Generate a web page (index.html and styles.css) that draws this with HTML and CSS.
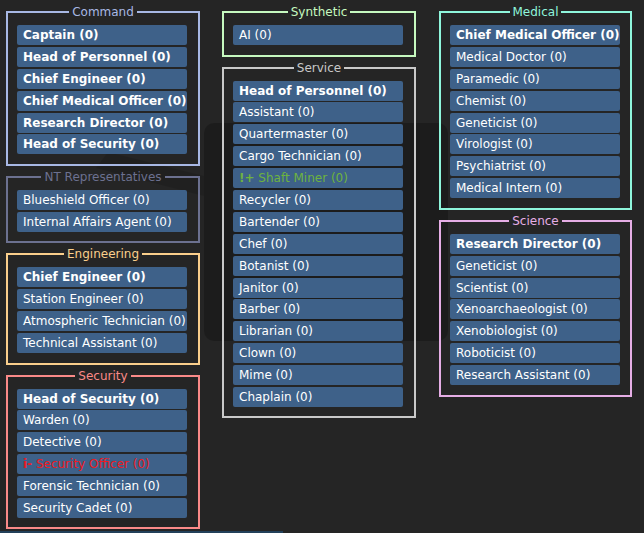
FILE: index.html
```html
<!DOCTYPE html>
<html>
<head>
<meta charset="utf-8">
<link rel="stylesheet" href="styles.css">
</head>
<body>
<svg class="watermark" width="644" height="533" viewBox="0 0 644 533" aria-hidden="true">
  <rect x="204" y="123" width="244" height="218" rx="10" fill="#000" opacity="0.22"/>
  <polygon points="108,152 204,176 204,196 96,168" fill="#000" opacity="0.12"/>
</svg>
<div class="page">
  <div class="col">
    <fieldset class="dept command">
      <legend>Command</legend>
      <div class="job head">Captain (0)</div>
      <div class="job head">Head of Personnel (0)</div>
      <div class="job head">Chief Engineer (0)</div>
      <div class="job head">Chief Medical Officer (0)</div>
      <div class="job head">Research Director (0)</div>
      <div class="job head">Head of Security (0)</div>
    </fieldset>
    <fieldset class="dept ntrep">
      <legend>NT Representatives</legend>
      <div class="job">Blueshield Officer (0)</div>
      <div class="job">Internal Affairs Agent (0)</div>
    </fieldset>
    <fieldset class="dept engineering">
      <legend>Engineering</legend>
      <div class="job head">Chief Engineer (0)</div>
      <div class="job">Station Engineer (0)</div>
      <div class="job">Atmospheric Technician (0)</div>
      <div class="job">Technical Assistant (0)</div>
    </fieldset>
    <fieldset class="dept security">
      <legend>Security</legend>
      <div class="job head">Head of Security (0)</div>
      <div class="job">Warden (0)</div>
      <div class="job">Detective (0)</div>
      <div class="job low"><b>i-</b> Security Officer (0)</div>
      <div class="job">Forensic Technician (0)</div>
      <div class="job">Security Cadet (0)</div>
    </fieldset>
  </div>
  <div class="col">
    <fieldset class="dept synthetic">
      <legend>Synthetic</legend>
      <div class="job">AI (0)</div>
    </fieldset>
    <fieldset class="dept service">
      <legend>Service</legend>
      <div class="job head">Head of Personnel (0)</div>
      <div class="job">Assistant (0)</div>
      <div class="job">Quartermaster (0)</div>
      <div class="job">Cargo Technician (0)</div>
      <div class="job high"><b>!+</b> Shaft Miner (0)</div>
      <div class="job">Recycler (0)</div>
      <div class="job">Bartender (0)</div>
      <div class="job">Chef (0)</div>
      <div class="job">Botanist (0)</div>
      <div class="job">Janitor (0)</div>
      <div class="job">Barber (0)</div>
      <div class="job">Librarian (0)</div>
      <div class="job">Clown (0)</div>
      <div class="job">Mime (0)</div>
      <div class="job">Chaplain (0)</div>
    </fieldset>
  </div>
  <div class="col col-right">
    <fieldset class="dept medical">
      <legend>Medical</legend>
      <div class="job head">Chief Medical Officer (0)</div>
      <div class="job">Medical Doctor (0)</div>
      <div class="job">Paramedic (0)</div>
      <div class="job">Chemist (0)</div>
      <div class="job">Geneticist (0)</div>
      <div class="job">Virologist (0)</div>
      <div class="job">Psychiatrist (0)</div>
      <div class="job">Medical Intern (0)</div>
    </fieldset>
    <fieldset class="dept science">
      <legend>Science</legend>
      <div class="job head">Research Director (0)</div>
      <div class="job">Geneticist (0)</div>
      <div class="job">Scientist (0)</div>
      <div class="job">Xenoarchaeologist (0)</div>
      <div class="job">Xenobiologist (0)</div>
      <div class="job">Roboticist (0)</div>
      <div class="job">Research Assistant (0)</div>
    </fieldset>
  </div>
</div>
<div class="footer-bar"></div>
</body>
</html>
```
FILE: styles.css
```css
html {
  background: #252525;
}
body {
  margin: 0;
  position: relative;
  font-family: "DejaVu Sans", Verdana, sans-serif;
  font-size: 12px;
  color: #ffffff;
  overflow: hidden;
  height: 533px;
}
.watermark {
  position: absolute;
  left: 0;
  top: 0;
  z-index: 0;
}
.page {
  position: relative;
  z-index: 1;
  display: grid;
  grid-template-columns: 194px 194px 194px;
  column-gap: 22px;
  padding: 5px 0 0 6px;
  align-items: start;
}
.col {
  display: flex;
  flex-direction: column;
  gap: 4px;
}
.col-right {
  margin-left: 1px;
}
.dept {
  margin: 0;
  min-width: 0;
  border: 2px solid var(--c);
  padding: 6px 9px 9.5px 9px;
  display: flex;
  flex-direction: column;
  gap: 1.9px;
}
.dept legend {
  margin: 0 auto;
  padding: 0 3px;
  color: var(--c);
  font-size: 12px;
  line-height: 14px;
}
.command { --c: #a8b8e4; }
.ntrep { --c: #6c7190; }
.engineering { --c: #fbcf8c; }
.security { --c: #fb8a88; }
.synthetic { --c: #c6f9bf; }
.service { --c: #c9c9c9; }
.medical { --c: #8ff6dc; }
.science { --c: #e6aee6; }

.job {
  box-sizing: border-box;
  width: 170px;
  height: 20px;
  line-height: 20px;
  padding: 0 6px;
  background: #3e6189;
  border-radius: 2px;
  white-space: nowrap;
  color: #ffffff;
}
.job.head {
  font-weight: bold;
}
.job.high {
  color: #6db33f;
}
.job.low {
  color: #ee1a22;
}
.footer-bar {
  position: relative;
  z-index: 1;
  margin-top: 2px;
  width: 283px;
  height: 2px;
  background: #22405a;
}
```
